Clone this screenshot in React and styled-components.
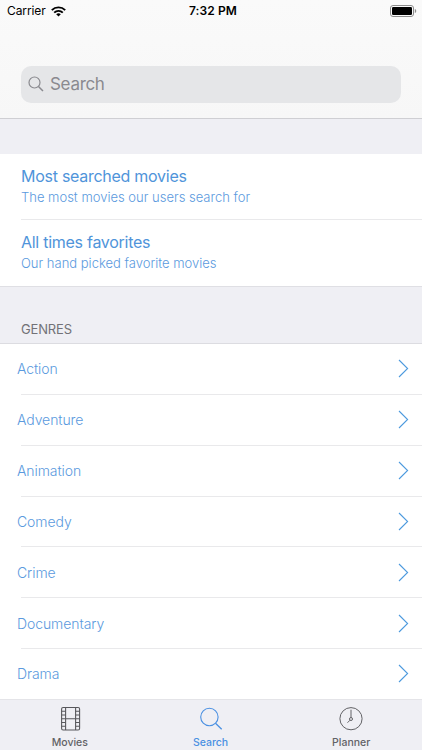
import React, { Component } from 'react'
import styled, { createGlobalStyle } from 'styled-components';

const GlobalStyle = createGlobalStyle`
  * {
    box-sizing: border-box;
  }
  body {
    margin: 0;
    font-family: Inter, "Liberation Sans", sans-serif;
  }
`;

const Container = styled.div`
  display: flex;
  flex-direction: column;
  height: 750px;
  overflow: hidden;
  background: #efeff4;
`;
const Header = styled.div`
  flex: none;
  height: 119px;
  background: linear-gradient(#fafafa, #f7f7f7);
  border-bottom: 1px solid #cfcfd3;
`;
const StatusBar = styled.div`
  display: grid;
  grid-template-columns: 1fr auto 1fr;
  align-items: center;
  height: 22px;
  padding: 0 5px 0 7px;
  color: #000;
  font-size: 12px;
  line-height: 22px;
`;
const Carrier = styled.div`
  display: flex;
  align-items: center;
  gap: 5px;
  letter-spacing: -0.1px;
`;
const Time = styled.div`
  padding-left: 2px;
  font-weight: 600;
  letter-spacing: 0.1px;
`;
const BatteryWrapper = styled.div`
  display: flex;
  justify-content: flex-end;
`;
const SearchField = styled.div`
  display: flex;
  align-items: center;
  height: 37px;
  margin: 44px 21px 0;
  padding: 0 0 1px 7px;
  border-radius: 10px;
  background: #e5e6e8;
  color: #8a8a8f;
  font-size: 17px;
  letter-spacing: -0.3px;
`;
const Placeholder = styled.span`
  margin-left: 6px;
`;
const Featured = styled.div`
  flex: none;
  margin-top: 35px;
  border-bottom: 1px solid #dfdfe4;
  background: #fff;
`;
const FeaturedItem = styled.div`
  height: 66px;
  margin-left: 21px;
  padding-top: 12px;
  ${props => !props.$last && 'border-bottom: 1px solid #e9e9eb;'}
`;
const Title = styled.div`
  color: #4f94da;
  font-size: 16px;
  line-height: 21px;
  letter-spacing: -0.27px;
`;
const Subtitle = styled.div`
  color: #5b9ade;
  font-size: 13px;
  font-weight: 300;
  line-height: 20px;
`;
const SectionTitle = styled.div`
  flex: none;
  height: 57px;
  padding: 32px 21px 0;
  border-bottom: 1px solid #dcdce1;
  color: #727277;
  font-size: 13px;
  line-height: 20px;
  letter-spacing: -0.15px;
`;
const Genres = styled.div`
  flex: 1;
  overflow: hidden;
  background: #fff;
`;
const Genre = styled.div`
  display: flex;
  align-items: center;
  justify-content: space-between;
  height: 50.85px;
  padding: 0 13px 1.2px 17px;
  background: linear-gradient(#e9e9eb, #e9e9eb) 21px 100% / 100% 1px no-repeat;
  color: #5b9ade;
  font-size: 14px;
  font-weight: 300;
  letter-spacing: -0.08px;
`;
const TabBar = styled.div`
  display: flex;
  flex: none;
  height: 51px;
  border-top: 1px solid #e4e4e8;
  background: #efeff4;
`;
const Tab = styled.div`
  display: flex;
  flex: 1;
  flex-direction: column;
  align-items: center;
  padding: 6px 1px 0 0;
  color: ${props => props.$selected ? '#4a90e2' : '#626266'};
  font-size: 10.5px;
  font-weight: 500;
  line-height: 14px;
`;
const TabLabel = styled.div`
  margin-top: 5px;
`;

const WifiIcon = () => (
  <svg width="15" height="11" viewBox="0 0 15 11" fill="none" stroke="#000" strokeWidth="1.9">
    <path d="M0.8 4.1a9.5 9.5 0 0 1 13.4 0" />
    <path d="M3.2 6.6a6.1 6.1 0 0 1 8.6 0" />
    <path d="M7.5 10.6 5.2 8.3a3.3 3.3 0 0 1 4.6 0z" fill="#000" stroke="none" />
  </svg>
);

const BatteryIcon = () => (
  <svg width="27" height="12" viewBox="0 0 27 12">
    <rect x="0.5" y="0.5" width="23" height="11" rx="2.5" fill="none" stroke="#8c8c8c" />
    <rect x="2" y="2" width="20" height="8" rx="1.2" fill="#000" />
    <path d="M24.8 4v4c1-.4 1.4-1.1 1.4-2s-.4-1.6-1.4-2z" fill="#8c8c8c" />
  </svg>
);

const FieldIcon = () => (
  <svg width="16" height="16" viewBox="0 0 16 16" fill="none" stroke="#8a8a8f" strokeWidth="1.2">
    <circle cx="6.5" cy="6.5" r="5.5" />
    <path d="M10.5 10.5 15 15" strokeWidth="1.5" />
  </svg>
);

const Chevron = () => (
  <svg width="11" height="19" viewBox="0 0 11 19" fill="none" stroke="#4d9ade" strokeWidth="1.1">
    <path d="M1 1 9.6 9.5 1 18" />
  </svg>
);

const MoviesIcon = () => (
  <svg width="24" height="25" viewBox="0 0 24 25" fill="none" stroke="#58585c" strokeWidth="1.1">
    <rect x="3.6" y="1.5" width="18" height="22.5" rx="1.5" />
    <path d="M7.6 1.5V24M17.6 1.5V24M7.6 12.7h10" />
    <path d="M3.6 5.2h4M3.6 9h4M3.6 12.7h4M3.6 16.5h4M3.6 20.2h4M17.6 5.2h4M17.6 9h4M17.6 12.7h4M17.6 16.5h4M17.6 20.2h4" />
  </svg>
);

const SearchIcon = () => (
  <svg width="24" height="25" viewBox="0 0 24 25" fill="none" stroke="#4a90e2" strokeWidth="1.1">
    <circle cx="10.4" cy="11" r="8.7" />
    <path d="M16.5 17.2 22.7 23.3" strokeWidth="1.3" />
  </svg>
);

const PlannerIcon = () => (
  <svg width="24" height="25" viewBox="0 0 24 25" fill="none" stroke="#626266">
    <circle cx="12" cy="12.7" r="11.1" />
    <circle cx="12" cy="13" r="1.5" />
    <path d="M12 3.7v7.8M11 14.2 8.5 16.7" />
  </svg>
);

const genres = ['Action', 'Adventure', 'Animation', 'Comedy', 'Crime', 'Documentary', 'Drama'];

class App extends Component {

  constructor(props) {
    super(props)

    this.state = {
      tab: 'search'
    }
  }

  render() {
    const tab = this.state.tab;
    return (
      <Container>
        <GlobalStyle />
        <Header>
          <StatusBar>
            <Carrier>Carrier <WifiIcon /></Carrier>
            <Time>7:32 PM</Time>
            <BatteryWrapper><BatteryIcon /></BatteryWrapper>
          </StatusBar>
          <SearchField>
            <FieldIcon />
            <Placeholder>Search</Placeholder>
          </SearchField>
        </Header>

        <Featured>
          <FeaturedItem>
            <Title>Most searched movies</Title>
            <Subtitle>The most movies our users search for</Subtitle>
          </FeaturedItem>
          <FeaturedItem $last>
            <Title>All times favorites</Title>
            <Subtitle>Our hand picked favorite movies</Subtitle>
          </FeaturedItem>
        </Featured>

        <SectionTitle>GENRES</SectionTitle>
        <Genres>
          {genres.map(genre => (
            <Genre key={genre}>
              {genre}
              <Chevron />
            </Genre>
          ))}
        </Genres>

        <TabBar>
          <Tab $selected={tab === 'movies'} onClick={() => this.setState({ tab: 'movies' })}>
            <MoviesIcon />
            <TabLabel>Movies</TabLabel>
          </Tab>
          <Tab $selected={tab === 'search'} onClick={() => this.setState({ tab: 'search' })}>
            <SearchIcon />
            <TabLabel>Search</TabLabel>
          </Tab>
          <Tab $selected={tab === 'planner'} onClick={() => this.setState({ tab: 'planner' })}>
            <PlannerIcon />
            <TabLabel>Planner</TabLabel>
          </Tab>
        </TabBar>
      </Container>
    )
  }
}

export default App;
